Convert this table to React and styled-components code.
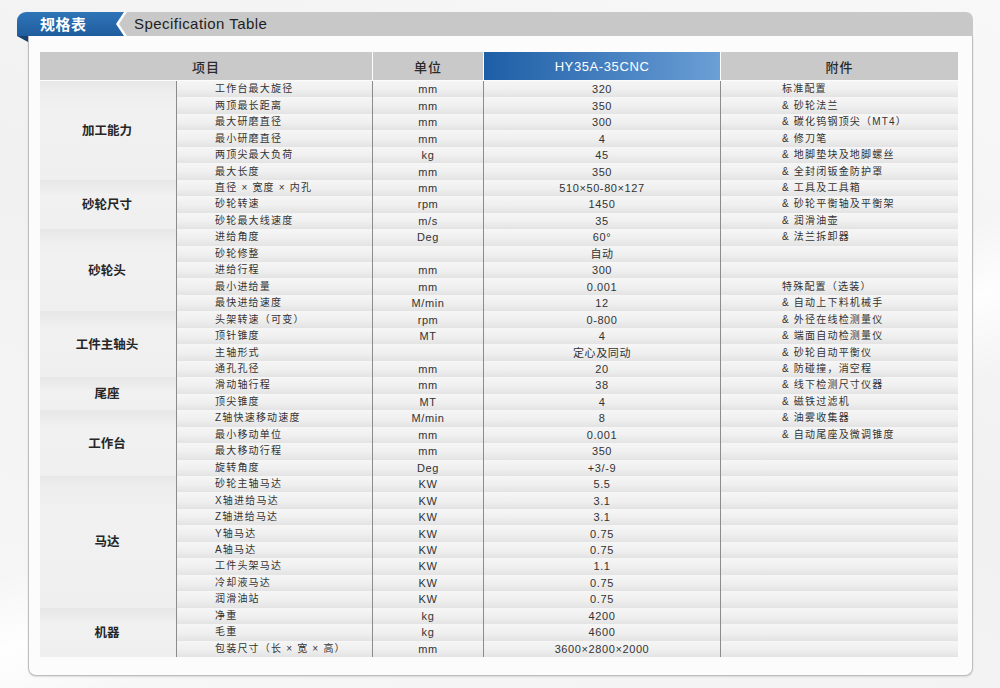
import React from "react";
import styled, { createGlobalStyle } from "styled-components";

const Global = createGlobalStyle`
  html, body { margin: 0; padding: 0; }
  body {
    background: #f4f4f4;
    font-family: "Liberation Sans", "Noto Sans CJK SC", sans-serif;
    color: #333;
  }
`;

const Page = styled.div`
  width: 1000px;
  height: 688px;
  box-sizing: border-box;
  padding: 12px 27px 0 17px;
  background:
    linear-gradient(160deg, rgba(255,255,255,0) 55%, rgba(255,255,255,0.9) 62%, rgba(255,255,255,0) 70%),
    linear-gradient(200deg, #f8f8f8 0%, #f1f1f1 50%, #f7f7f7 100%);
  overflow: hidden;
`;

const Header = styled.div`
  display: flex;
  height: 24px;
`;

const Tab = styled.div`
  width: 108px;
  flex: none;
  background: linear-gradient(to bottom, #2f74b8, #1f5d9e);
  border-top-left-radius: 9px;
  color: #fff;
  font-family: "Noto Sans CJK SC", sans-serif;
  font-weight: 700;
  font-size: 15px;
  line-height: 24px;
  padding-left: 23px;
  box-sizing: border-box;
  letter-spacing: 0.5px;
`;

const Bar = styled.div`
  flex: 1;
  margin-left: -9px;
  background: #ffffff;
  border-top-right-radius: 7px;
  clip-path: polygon(8px 0, 100% 0, 100% 100%, 8px 100%, 0 50%);
  display: flex;
`;

const BarFill = styled.div`
  flex: 1;
  margin-left: 3px;
  background: #c8c8c8;
  border-top-right-radius: 7px;
  clip-path: polygon(8px 0, 100% 0, 100% 100%, 8px 100%, 0 50%);
  font-family: "Liberation Sans", sans-serif;
  font-size: 15px;
  letter-spacing: 0.45px;
  color: #1e1e1e;
  line-height: 24px;
  padding-left: 15px;
`;

const Body = styled.div`
  display: flex;
`;

const Fold = styled.div`
  width: 11px;
  height: 6px;
  flex: none;
  background: #16406e;
  clip-path: polygon(0 0, 100% 0, 100% 100%);
`;

const Card = styled.div`
  width: 945px;
  height: 640px;
  box-sizing: border-box;
  background: #fcfcfc;
  border: 1px solid #bdbdbd;
  border-top: none;
  border-radius: 0 0 8px 8px;
  box-shadow: 0 1px 2px rgba(0,0,0,0.12);
  padding: 16px 13px 0 11px;
`;

const HeadRow = styled.div`
  display: grid;
  grid-template-columns: 332px 110px 236px 237px;
  gap: 1px;
  height: 28px;
  margin-bottom: 1px;
`;

const HeadCell = styled.div`
  background: ${(p) => (p.$accent ? "linear-gradient(to right, #1e5ea6, #4f88c6 65%, #6b9fd5)" : "#c9c9c9")};
  color: ${(p) => (p.$accent ? "#fff" : "#2a2a2a")};
  font-family: ${(p) => (p.$accent ? `"Liberation Sans", sans-serif` : `"Noto Sans CJK SC", sans-serif`)};
  font-weight: ${(p) => (p.$accent ? 400 : 500)};
  font-size: 13px;
  letter-spacing: ${(p) => (p.$accent ? "0.6px" : "1px")};
  display: flex;
  align-items: center;
  justify-content: center;
`;

const Grid = styled.div`
  display: grid;
  grid-template-columns: 136px 196px 111px 237px 238px;
  grid-template-rows: repeat(35, 1fr);
  height: 576px;
`;

const Category = styled.div`
  grid-column: 1;
  grid-row: span ${(p) => p.$span};
  background: linear-gradient(to bottom, #e7e7e7 0px, #eeeeee 12px, #f1f1f1 30%, #efefef 100%);
  display: flex;
  align-items: center;
  justify-content: center;
  font-family: "Noto Sans CJK SC", sans-serif;
  font-weight: 700;
  font-size: 12.5px;
  color: #262626;
  padding: 0 2px 2px 0;
`;

const Cell = styled.div`
  border-left: 1px solid #8c8c8c;
  background: linear-gradient(to bottom, #f6f6f6 0%, #efefef 55%, #e3e3e3 100%);
  font-size: ${(p) => (p.$center ? "11px" : "10px")};
  line-height: 16px;
  color: #333;
  display: flex;
  align-items: center;
  white-space: nowrap;
  overflow: hidden;
  justify-content: ${(p) => (p.$center ? "center" : "flex-start")};
  padding-left: ${(p) => p.$pad || 0}px;
  letter-spacing: ${(p) => (p.$wide ? "1.2px" : "0.6px")};
`;

const groups = [
  ["加工能力", [
    ["工作台最大旋径", "mm", "320"],
    ["两顶最长距离", "mm", "350"],
    ["最大研磨直径", "mm", "300"],
    ["最小研磨直径", "mm", "4"],
    ["两顶尖最大负荷", "kg", "45"],
    ["最大长度", "mm", "350"],
  ]],
  ["砂轮尺寸", [
    ["直径 × 宽度 × 内孔", "mm", "510×50-80×127"],
    ["砂轮转速", "rpm", "1450"],
    ["砂轮最大线速度", "m/s", "35"],
  ]],
  ["砂轮头", [
    ["进给角度", "Deg", "60°"],
    ["砂轮修整", "", "自动"],
    ["进给行程", "mm", "300"],
    ["最小进给量", "mm", "0.001"],
    ["最快进给速度", "M/min", "12"],
  ]],
  ["工件主轴头", [
    ["头架转速（可变）", "rpm", "0-800"],
    ["顶针锥度", "MT", "4"],
    ["主轴形式", "", "定心及同动"],
    ["通孔孔径", "mm", "20"],
  ]],
  ["尾座", [
    ["滑动轴行程", "mm", "38"],
    ["顶尖锥度", "MT", "4"],
  ]],
  ["工作台", [
    ["Z轴快速移动速度", "M/min", "8"],
    ["最小移动单位", "mm", "0.001"],
    ["最大移动行程", "mm", "350"],
    ["旋转角度", "Deg", "+3/-9"],
  ]],
  ["马达", [
    ["砂轮主轴马达", "KW", "5.5"],
    ["X轴进给马达", "KW", "3.1"],
    ["Z轴进给马达", "KW", "3.1"],
    ["Y轴马达", "KW", "0.75"],
    ["A轴马达", "KW", "0.75"],
    ["工件头架马达", "KW", "1.1"],
    ["冷却液马达", "KW", "0.75"],
    ["润滑油站", "KW", "0.75"],
  ]],
  ["机器", [
    ["净重", "kg", "4200"],
    ["毛重", "kg", "4600"],
    ["包装尺寸（长 × 宽 × 高）", "mm", "3600×2800×2000"],
  ]],
];

const accessories = [
  "标准配置",
  "& 砂轮法兰",
  "& 碳化钨钢顶尖（MT4）",
  "& 修刀笔",
  "& 地脚垫块及地脚螺丝",
  "& 全封闭钣金防护罩",
  "& 工具及工具箱",
  "& 砂轮平衡轴及平衡架",
  "& 润滑油壶",
  "& 法兰拆卸器",
  "",
  "",
  "特殊配置（选装）",
  "& 自动上下料机械手",
  "& 外径在线检测量仪",
  "& 端面自动检测量仪",
  "& 砂轮自动平衡仪",
  "& 防碰撞，消空程",
  "& 线下检测尺寸仪器",
  "& 磁铁过滤机",
  "& 油雾收集器",
  "& 自动尾座及微调锥度",
];

export default function App() {
  let idx = 0;
  return (
    <>
      <Global />
      <Page>
        <Header>
          <Tab>规格表</Tab>
          <Bar>
            <BarFill>Specification Table</BarFill>
          </Bar>
        </Header>
        <Body>
          <Fold />
          <Card>
            <HeadRow>
              <HeadCell>项目</HeadCell>
              <HeadCell>单位</HeadCell>
              <HeadCell $accent>HY35A-35CNC</HeadCell>
              <HeadCell>附件</HeadCell>
            </HeadRow>
            <Grid>
              {groups.map(([name, rows]) => (
                <React.Fragment key={name}>
                  <Category $span={rows.length}>{name}</Category>
                  {rows.map(([item, unit, value]) => {
                    const acc = accessories[idx] || "";
                    idx += 1;
                    return (
                      <React.Fragment key={item}>
                        <Cell $pad={38} $wide>{item}</Cell>
                        <Cell $center>{unit}</Cell>
                        <Cell $center>{value}</Cell>
                        <Cell $pad={61} $wide>{acc}</Cell>
                      </React.Fragment>
                    );
                  })}
                </React.Fragment>
              ))}
            </Grid>
          </Card>
        </Body>
      </Page>
    </>
  );
}
